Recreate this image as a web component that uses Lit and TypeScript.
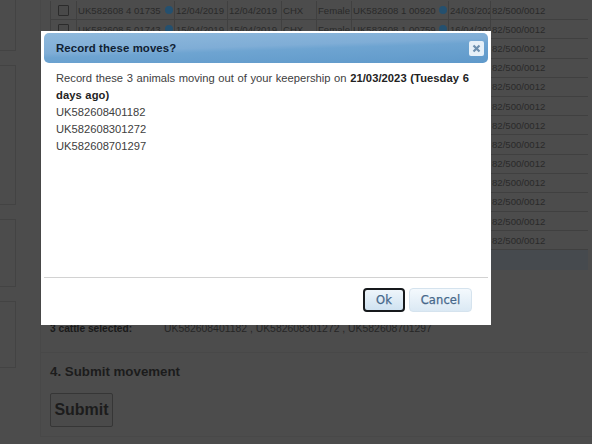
import { LitElement, html, css } from "lit";
import { customElement } from "lit/decorators.js";

const last = "82/500/0012";
const rows = [
  ["UK582608 4 01735", "12/04/2019", "12/04/2019", "CHX", "Female", "UK582608 1 00920", "24/03/2021"],
  ["UK582608 5 01743", "15/04/2019", "15/04/2019", "CHX", "Female", "UK582608 1 00759", "16/04/2021"],
];
const hiddenRows = Array.from({ length: 11 });

@customElement("app-root")
export class AppRoot extends LitElement {
  static styles = css`
    :host { display: block; width: 592px; height: 444px; overflow: hidden; position: relative; background: #4c4c4c; font-family: "Liberation Sans", Arial, sans-serif; }
    .page { display: grid; grid-template-columns: 16px 1fr; column-gap: 24px; height: 444px; color: #1c1c1c; font-size: 9.6px; }
    .side { display: flex; flex-direction: column; gap: 14px; margin-top: -1px; }
    .side div { height: 65px; border: solid #434343; border-width: 1px 1px 1px 0; }
    .side div:nth-child(1) { height: 50px; }
    .side div:nth-child(2) { height: 138px; }
    .side div:nth-child(3) { height: 66px; }
    .main { min-width: 0; height: 436px; padding-right: 4px; display: flex; flex-direction: column; border-left: 1px solid #484848; border-bottom: 1px solid #484848; }
    .table { margin: 1px 0 0 9px; display: flex; flex-direction: column; }
    .row { display: grid; grid-template-columns: 26px 98px 53px 54px 35px 35px 97px 42px 97px; height: 19.2px; box-sizing: border-box; border-bottom: 1px solid #404040; align-items: center; white-space: nowrap; }
    .row > span { overflow: hidden; padding-left: 1px; border-left: 1px solid #404040; height: 18px; display: flex; align-items: center; justify-content: space-between; box-sizing: border-box; color: #2a2a2a; }
    .box { width: 9px; height: 9px; border: 1px solid #2b2b2b; border-radius: 1px; margin-left: 6px; background: #494949; }
    .info { width: 8px; height: 8px; border-radius: 50%; background: #24506f; flex: none; margin-right: 1px; }
    .band { height: 20px; background: #464a4e; flex: none; }
    .sel { margin-top: 52px; padding-left: 9px; height: 29.4px; flex: none; display: flex; font-size: 10.4px; line-height: 13px; border-bottom: 1px solid #484848; white-space: nowrap; }
    .sel b { width: 114px; flex: none; font-size: 10.2px; color: #1a1a1a; }
    .sel span { color: #262626; }
    h4 { margin: 0; padding: 10px 0 0 9px; font-size: 13.3px; line-height: 18px; color: #1c1c1c; font-weight: bold; }
    .submit { margin: 12px 0 0 9px; width: 63px; height: 34px; box-sizing: border-box; background: #4a4a4a; border: 1px solid #363636; border-radius: 2px; font: bold 16px "Liberation Sans", Arial, sans-serif; color: #1c1c1c; padding: 0; }
    .dialog { position: absolute; left: 41px; top: 31px; width: 450px; height: 294px; box-sizing: border-box; background: #fff; padding: 2px 3px 0 3px; display: flex; flex-direction: column; color: #333; }
    .title { height: 30px; flex: none; box-sizing: border-box; border-radius: 5px; padding: 0 4px 0 12px; display: flex; align-items: center; justify-content: space-between;
      background: linear-gradient(178deg, #8fb9dc 0%, #7fadd6 45%, #6ea4d1 55%, #5f99ca 100%); font-weight: bold; font-size: 11.4px; letter-spacing: 0.1px; color: #0f2133; }
    .close { width: 15px; height: 15px; background: #e6f0f8; border-radius: 2px; border: 0; padding: 0; display: flex; align-items: center; justify-content: center; }
    .body { flex: 1; padding: 7px 12px 0 12px; font-size: 11.2px; line-height: 17px; color: #404040; word-spacing: 0.5px; }
    .body b { color: #222; letter-spacing: 0.05px; }
    .foot { flex: none; height: 48px; box-sizing: border-box; border-top: 1px solid #d2d2d2; display: flex; justify-content: flex-end; align-items: flex-start; gap: 4px; padding: 10px 16px 0 0; }
    button.a { height: 24px; box-sizing: border-box; border-radius: 4px; font: normal 11.5px "DejaVu Sans", Verdana, sans-serif; letter-spacing: 0.1px; -webkit-text-stroke: 0.25px #46678a; color: #46678a; padding: 0; background: linear-gradient(#f4f9fd, #dbe9f4); }
    button.ok { width: 42px; border: 2px solid #16191c; background: linear-gradient(#eef5fb, #cfe2f1); }
    button.cancel { width: 63px; border: 1px solid #d5e3ee; }
  `;

  render() {
    return html`
      <div class="page">
        <div class="side"><div></div><div></div><div></div><div></div></div>
        <div class="main">
          <div class="table">
            ${rows.map((r) => html`<div class="row">
              <span><i class="box"></i></span>
              <span>${r[0]}<i class="info"></i></span>
              <span>${r[1]}</span><span>${r[2]}</span><span>${r[3]}</span><span>${r[4]}</span>
              <span>${r[5]}<i class="info"></i></span>
              <span>${r[6]}</span><span>${last}</span>
            </div>`)}
            ${hiddenRows.map(() => html`<div class="row">
              <span></span><span></span><span></span><span></span><span></span><span></span><span></span><span></span><span>${last}</span>
            </div>`)}
          </div>
          <div class="band"></div>
          <div class="sel"><b>3 cattle selected:</b><span>UK582608401182 , UK582608301272 , UK582608701297</span></div>
          <h4>4. Submit movement</h4>
          <button class="submit">Submit</button>
        </div>
      </div>
      <div class="dialog">
        <div class="title">
          <span>Record these moves?</span>
          <button class="close" aria-label="Close">
            <svg width="9" height="9" viewBox="0 0 9 9"><path d="M1.5 1.5l6 6M7.5 1.5l-6 6" stroke="#6d8fae" stroke-width="2.2"/></svg>
          </button>
        </div>
        <div class="body">
          Record these 3 animals moving out of your keepership on <b>21/03/2023 (Tuesday 6 days ago)</b><br />
          UK582608401182<br />UK582608301272<br />UK582608701297
        </div>
        <div class="foot">
          <button class="a ok">Ok</button>
          <button class="a cancel">Cancel</button>
        </div>
      </div>
    `;
  }
}
